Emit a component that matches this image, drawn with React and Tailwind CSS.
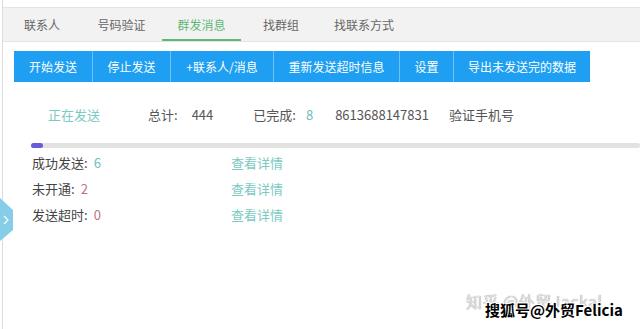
const tabs = [
  { label: "联系人", w: "w-[78px]" },
  { label: "号码验证", w: "w-[81px]" },
  { label: "群发消息", w: "w-[79px]", active: true },
  { label: "找群组", w: "w-[80px]" },
  { label: "找联系方式", w: "w-[86px]" },
];

const buttons = [
  { label: "开始发送", w: "w-[78px]" },
  { label: "停止发送", w: "w-[78px]" },
  { label: "+联系人/消息", w: "w-[103px]" },
  { label: "重新发送超时信息", w: "w-[126px]" },
  { label: "设置", w: "w-[54px]" },
  { label: "导出未发送完的数据", w: "w-[137px]" },
];

const stats = [
  { label: "成功发送:", value: "6", color: "text-[#6cc0bc]" },
  { label: "未开通:", value: "2", color: "text-[#c0708e]" },
  { label: "发送超时:", value: "0", color: "text-[#c0708e]" },
];

export default function App() {
  return (
    <div className="relative h-[329px] w-[640px] overflow-hidden bg-white font-['Noto_Sans_CJK_SC','Microsoft_YaHei',sans-serif] text-[#444]">
      <div className="ml-[2px] h-full border-l border-[#dcdcdc] pt-[7px]">
        {/* tab bar */}
        <div className="flex h-[35px] border-y border-[#e4e4e4] bg-[#f2f2f2] text-[12px]">
          {tabs.map((tab) => (
            <div
              key={tab.label}
              className={`${tab.w} flex items-center justify-center ${
                tab.active
                  ? "border-b-2 border-[#5fb878] pt-[2px] text-[#5fb878]"
                  : "text-[#666]"
              }`}
            >
              {tab.label}
            </div>
          ))}
        </div>

        {/* buttons */}
        <div className="ml-[11px] mt-[9px] flex h-[31px]">
          {buttons.map((btn, i) => (
            <div
              key={btn.label}
              className={`${btn.w} flex items-center justify-center bg-[#1e9ff2] text-[12px] text-white ${
                i > 0 ? "border-l border-[#6cc2f6]" : ""
              }`}
            >
              {btn.label}
            </div>
          ))}
        </div>

        {/* status row */}
        <div className="mt-[23px] flex h-[20px] items-center text-[13px]">
          <span className="ml-[45px] text-[#7ccac2]">正在发送</span>
          <span className="ml-[48px] text-[#555]">总计:</span>
          <span className="ml-[14px] text-[#555]">444</span>
          <span className="ml-[40px] text-[#555]">已完成:</span>
          <span className="ml-[10px] text-[#6cc0bc]">8</span>
          <span className="ml-[22px] text-[#555]">8613688147831</span>
          <span className="ml-[20px] text-[#555]">验证手机号</span>
        </div>

        {/* progress */}
        <div className="ml-[28px] mt-[18px] h-[5px] rounded-full bg-[#e2e2e2]">
          <div className="h-full w-[12px] rounded-full bg-[#6a5bd6]" />
        </div>

        {/* stats */}
        <div className="ml-[29px] mt-[2px] flex flex-col text-[13px]">
          {stats.map((s) => (
            <div key={s.label} className="flex h-[26px] items-center">
              <div className="w-[199px] text-[#444]">
                {s.label}
                <span className={`ml-[6px] ${s.color}`}>{s.value}</span>
              </div>
              <span className="text-[#7ccac2]">查看详情</span>
            </div>
          ))}
        </div>
      </div>

      {/* side handle */}
      <svg className="absolute left-0 top-[198px]" width="15" height="44" viewBox="0 0 15 44">
        <polygon points="0,0 13,12 13,32 0,43" fill="#86cde9" />
        <path d="M4 18 L8 22 L4 26" stroke="#fff" strokeWidth="1.2" fill="none" />
      </svg>

      {/* watermarks */}
      <div className="absolute left-[466px] top-[289px] text-[16px] tracking-[0.5px] text-[#e0e0e0] [text-shadow:0_0_1px_#888]">
        知乎 @外贸Jackal
      </div>
      <div className="absolute left-[485px] top-[299px] text-[15px] font-bold text-black [text-shadow:-1px_-1px_0_#fff,1px_-1px_0_#fff,-1px_1px_0_#fff,1px_1px_0_#fff]">
        搜狐号@外贸Felicia
      </div>
    </div>
  );
}
